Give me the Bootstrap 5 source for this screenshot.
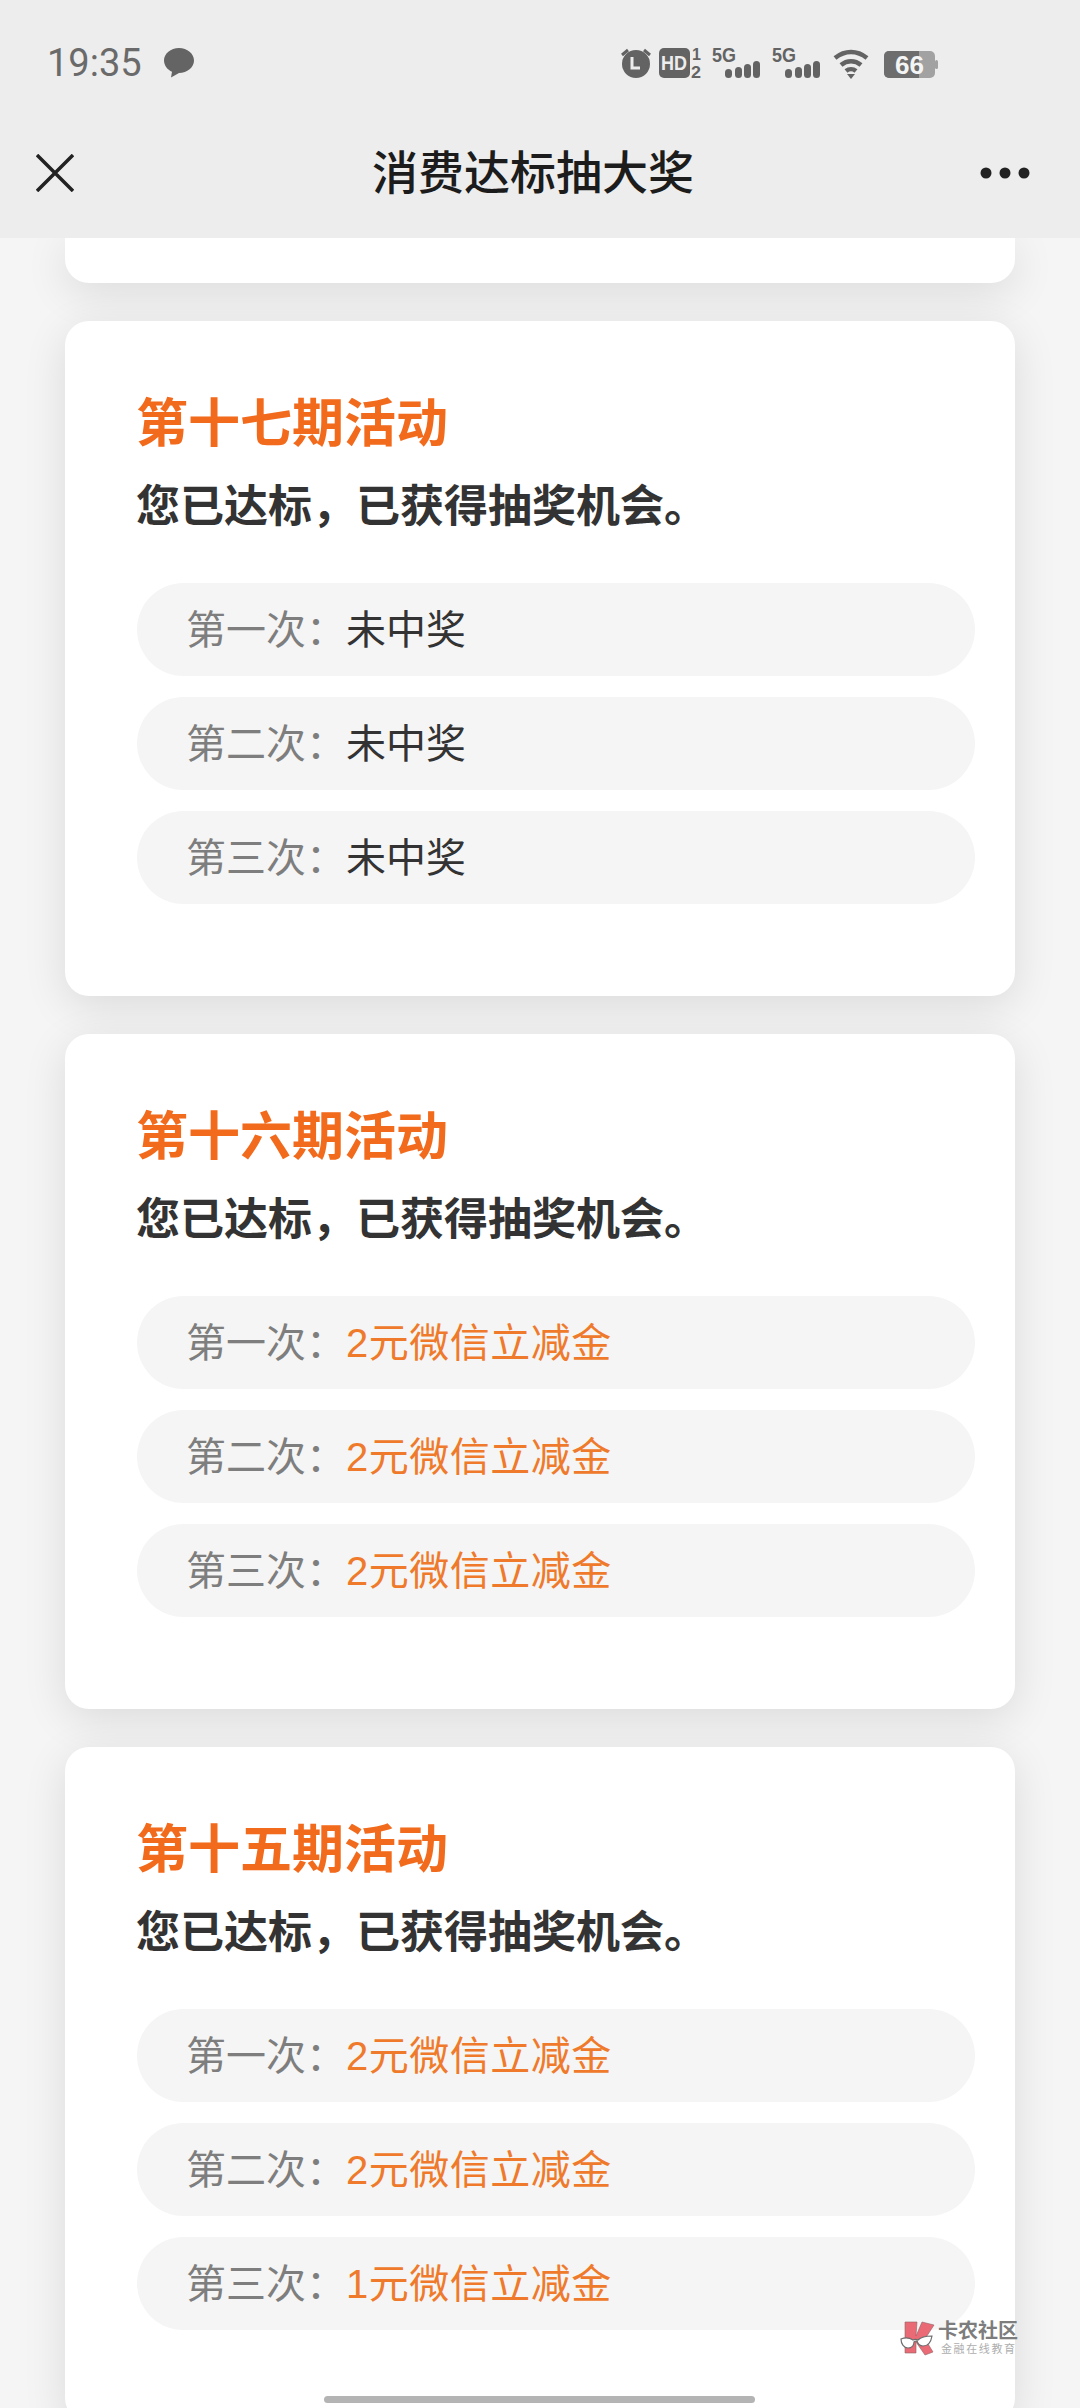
<!DOCTYPE html>
<html lang="zh-CN">
<head>
    <meta charset="UTF-8">
    <meta name="viewport" content="width=device-width, initial-scale=1.0">
    <title>消费达标抽大奖</title>
    <link rel="stylesheet" href="https://cdn.jsdelivr.net/npm/bootstrap@5.3.0/dist/css/bootstrap.min.css">
    <script defer src="https://cdn.jsdelivr.net/npm/bootstrap@5.3.0/dist/js/bootstrap.bundle.min.js"></script>
    <style>
        html, body { height: 2408px; overflow: hidden; }
        body { background: #f5f5f5; font-family: "Liberation Sans", "Noto Sans CJK SC", sans-serif; position: relative; }
        .top-head { background: #ededed; height: 238px; position: relative; z-index: 2; }
        .status-row { height: 108px; padding: 41px 140px 0 47px; }
        .status-time { font-family: Roboto, sans-serif; font-size: 38px; color: #6a6a6a; line-height: 44px; }
        .status-bubble { margin: 7px 0 0 22px; }
        .status-icons { margin: 1px 0 0 auto; }
        .title-row { height: 130px; padding: 0 50px 0 36px; }
        .title-text { font-size: 46px; font-weight: 500; color: #1c1c1c; line-height: 60px; margin-left: 12px; }
        .act-list { padding: 0 65px; gap: 38px; }
        .act-card { border: 0; border-radius: 24px; background: #fff; box-shadow: 0 10px 44px rgba(0, 0, 0, .11); padding: 73px 40px 92px 72px; flex-shrink: 0; }
        .act-cut { height: 45px; padding: 0; border-radius: 0 0 24px 24px; }
        .act-title { font-size: 52px; font-weight: 700; color: #f26a1c; line-height: 60px; margin: 0 0 23px -1px; }
        .act-sub { font-size: 44px; font-weight: 700; color: #333; line-height: 60px; margin: 0 0 46px -1px; }
        .draw-list { gap: 21px; }
        .draw-row { height: 93px; background: #f5f5f5; padding-left: 49px; font-size: 40px; line-height: 1; }
        .draw-label { color: #7e7e7e; }
        .draw-none { color: #333; }
        .draw-win { color: #ef7a2b; letter-spacing: .5px; }
        .home-bar { position: absolute; left: 324px; top: 2396px; width: 431px; height: 7px; background: #b4b4b4; border-radius: 4px; z-index: 3; }
        .mark-logo { position: absolute; left: 899px; top: 2320px; z-index: 3; gap: 3px; opacity: .95; }
        .mark-name { font-size: 20px; font-weight: 700; color: #777; line-height: 22px; white-space: nowrap; }
        .mark-tag { font-size: 11px; color: #aaa; line-height: 14px; letter-spacing: 1.600px; white-space: nowrap; margin-left: 3px; }
    </style>
</head>
<body>
    <!-- status bar + title bar -->
    <header class="top-head">
        <div class="status-row d-flex align-items-start">
            <span class="status-time">19:35</span>
            <svg class="status-bubble" width="30" height="30" viewBox="0 0 30 30"><path d="M15 0C6.700 0 0 5.600 0 12.500c0 5 3.500 9.300 8 11.200L7 29.500l8-4.500c8.300 0 15-5.600 15-12.500S23.300 0 15 0z" fill="#646464"/></svg>
            <div class="status-icons d-flex align-items-start">
                <svg width="319" height="40" viewBox="622 42 319 40">
                    <!-- alarm -->
                    <circle cx="637" cy="64" r="14" fill="#636363"/>
                    <path d="M633 57v11h8" stroke="#ededed" stroke-width="3" fill="none"/>
                    <path d="M623 55l6-5M651 55l-6-5" stroke="#636363" stroke-width="3"/>
                    <!-- HD 1/2 -->
                    <rect x="660" y="48" width="31" height="30" rx="5" fill="#636363"/>
                    <text x="662" y="70" font-family="Liberation Sans" font-weight="700" font-size="21" textLength="26" lengthAdjust="spacingAndGlyphs" fill="#ededed">HD</text>
                    <text x="693" y="60" font-family="Liberation Sans" font-weight="700" font-size="16" fill="#636363">1</text>
                    <text x="692" y="78" font-family="Liberation Sans" font-weight="700" font-size="17" textLength="10" lengthAdjust="spacingAndGlyphs" fill="#636363">2</text>
                    <!-- sim 1 -->
                    <text x="713" y="62" font-family="Liberation Sans" font-weight="700" font-size="20" textLength="24" lengthAdjust="spacingAndGlyphs" fill="#636363">5G</text>
                    <rect x="726" y="69" width="7" height="9" rx="3.500" fill="#636363"/>
                    <rect x="736" y="67" width="7" height="11" rx="3.500" fill="#636363"/>
                    <rect x="745" y="64" width="7" height="14" rx="3.500" fill="#636363"/>
                    <rect x="754" y="61" width="7" height="17" rx="3.500" fill="#636363"/>
                    <!-- sim 2 -->
                    <text x="773" y="62" font-family="Liberation Sans" font-weight="700" font-size="20" textLength="24" lengthAdjust="spacingAndGlyphs" fill="#636363">5G</text>
                    <rect x="786" y="69" width="7" height="9" rx="3.500" fill="#636363"/>
                    <rect x="796" y="67" width="7" height="11" rx="3.500" fill="#636363"/>
                    <rect x="805" y="64" width="7" height="14" rx="3.500" fill="#636363"/>
                    <rect x="814" y="61" width="7" height="17" rx="3.500" fill="#636363"/>
                    <!-- wifi -->
                    <path d="M836 58c10-8 22-8 32 0M842 65c6-5 14-5 20 0M847 71c3-2.500 7-2.500 10 0" stroke="#636363" stroke-width="4.500" fill="none"/>
                    <path d="M848 74h8l-4 5z" fill="#636363"/>
                    <!-- battery -->
                    <rect x="885" y="51" width="51" height="27" rx="5" fill="#a2a2a2"/>
                    <path d="M890 51h30v27h-30a5 5 0 0 1-5-5V56a5 5 0 0 1 5-5z" fill="#6d6d6d"/>
                    <rect x="936" y="60" width="3" height="9" rx="1.500" fill="#a2a2a2"/>
                    <text x="896" y="74" font-family="Liberation Sans" font-weight="700" font-size="25" textLength="29" lengthAdjust="spacingAndGlyphs" fill="#f4f4f4">66</text>
                </svg>
            </div>
        </div>
        <div class="title-row d-flex align-items-center justify-content-between">
            <svg width="38" height="38" viewBox="0 0 38 38"><path d="M1 1l36 36M37 1L1 37" stroke="#222" stroke-width="3.500" fill="none"/></svg>
            <span class="title-text">消费达标抽大奖</span>
            <svg width="50" height="12" viewBox="0 0 50 12" fill="#222"><circle cx="6" cy="6" r="5.500"/><circle cx="25" cy="6" r="5.500"/><circle cx="44" cy="6" r="5.500"/></svg>
        </div>
    </header>

    <main class="act-list d-flex flex-column">
        <div class="card act-card act-cut"></div>
        <div id="cards" class="d-flex flex-column"></div>
    </main>

    <div class="home-bar"></div>

    <!-- watermark -->
    <div class="mark-logo d-flex align-items-start">
        <svg width="36" height="36" viewBox="0 0 36 36">
            <path d="M6 2h12l-1 14 6-14 12 3-9 14 8 13-8 3-9-13v11H6z" fill="#e9636e" stroke="#8a5a5f" stroke-width=".6"/>
            <path d="M2 19c5-2 9-1 12 1 2-1 3-1 5 0 3-3 8-4 14-4-1 6-4 10-9 10-3 0-5-2-6-5-1 0-2 0-3 1 0 4-3 6-6 6-4 0-7-4-7-9z" fill="#fff" stroke="#666" stroke-width="1.200"/>
        </svg>
        <div>
            <div class="mark-name">卡农社区</div>
            <div class="mark-tag">金融在线教育</div>
        </div>
    </div>

    <script>
        const periods = [
            { name: '第十七期活动', draws: [['第一次', '未中奖'], ['第二次', '未中奖'], ['第三次', '未中奖']] },
            { name: '第十六期活动', draws: [['第一次', '2元微信立减金'], ['第二次', '2元微信立减金'], ['第三次', '2元微信立减金']] },
            { name: '第十五期活动', draws: [['第一次', '2元微信立减金'], ['第二次', '2元微信立减金'], ['第三次', '1元微信立减金']] }
        ];

        // full-width punctuation
        const comma = '\uFF0C';
        const colon = '\uFF1A';

        const cards = document.getElementById('cards');
        cards.style.gap = '38px';
        cards.innerHTML = periods.map((p) => `
            <section class="card act-card">
                <h2 class="act-title">${p.name}</h2>
                <p class="act-sub">您已达标${comma}已获得抽奖机会。</p>
                <div class="draw-list d-flex flex-column">
                    ${p.draws.map((d) => `
                        <div class="draw-row rounded-pill d-flex align-items-center">
                            <span class="draw-label">${d[0]}${colon}</span>
                            <span class="${d[1] === '未中奖' ? 'draw-none' : 'draw-win'}">${d[1]}</span>
                        </div>`).join('')}
                </div>
            </section>`).join('');
    </script>
</body>
</html>
